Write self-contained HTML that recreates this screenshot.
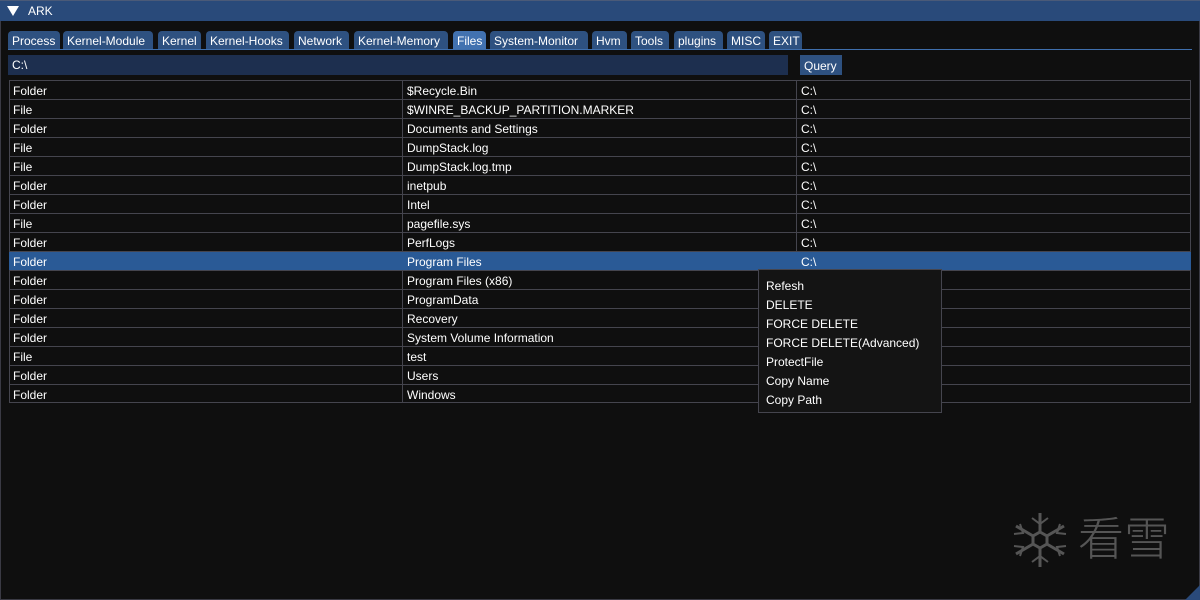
<!DOCTYPE html>
<html><head><meta charset="utf-8"><style>
*{margin:0;padding:0;box-sizing:border-box}
body{width:1200px;height:600px;background:#0f0f0f;font-family:"Liberation Sans","Noto Sans CJK SC",sans-serif;font-size:12px;color:#fff;position:relative;overflow:hidden}
.a{position:absolute;white-space:nowrap}
.tb{left:0;top:0;width:1200px;height:21px;background:#294a7a;border-top:1px solid #4a5a78}
.tab{top:31px;height:18px;background:#2e5180;border-radius:4px 4px 0 0;padding:3px 4px 0;line-height:15px}
.row{left:9px;width:1182px;height:19px;border-bottom:1px solid #45454e}
.c{position:absolute;top:3px;line-height:15px}
.mi{left:766px;line-height:15px}
</style></head><body>
<div class="a" style="left:0;top:0;width:1200px;height:600px;border:1px solid #3a3a44"></div>
<div class="a tb"></div>
<div class="a" style="left:7px;top:6px;width:0;height:0;border-left:6px solid transparent;border-right:6px solid transparent;border-top:10px solid #fff"></div>
<div class="a" style="left:28px;top:4px;line-height:15px">ARK</div>
<div class="a" style="left:8px;top:49px;width:1184px;height:1px;background:#3f6fad"></div>
<div class="a tab" style="left:8px;width:52px">Process</div>
<div class="a tab" style="left:63px;width:90px">Kernel-Module</div>
<div class="a tab" style="left:158px;width:43px">Kernel</div>
<div class="a tab" style="left:206px;width:83px">Kernel-Hooks</div>
<div class="a tab" style="left:294px;width:55px">Network</div>
<div class="a tab" style="left:354px;width:94px">Kernel-Memory</div>
<div class="a tab" style="left:453px;width:33px;background:#4272b0">Files</div>
<div class="a tab" style="left:490px;width:98px">System-Monitor</div>
<div class="a tab" style="left:592px;width:35px">Hvm</div>
<div class="a tab" style="left:631px;width:38px">Tools</div>
<div class="a tab" style="left:674px;width:49px">plugins</div>
<div class="a tab" style="left:727px;width:38px">MISC</div>
<div class="a tab" style="left:769px;width:33px">EXIT</div>
<div class="a" style="left:8px;top:55px;width:780px;height:20px;background:#1d2f4f;padding:3px 4px;line-height:15px">C:\</div>
<div class="a" style="left:800px;top:55px;width:42px;height:20px;background:#2e5180;padding:4px 4px;line-height:15px">Query</div>
<div class="a" style="left:9px;top:80px;width:1182px;height:323px;border:1px solid #45454e"></div>
<div class="a" style="left:402px;top:80px;width:1px;height:323px;background:#45454e"></div>
<div class="a" style="left:796px;top:80px;width:1px;height:323px;background:#45454e"></div>
<div id="rows"></div>
<script>
var d=[["Folder","$Recycle.Bin"],["File","$WINRE_BACKUP_PARTITION.MARKER"],["Folder","Documents and Settings"],["File","DumpStack.log"],["File","DumpStack.log.tmp"],["Folder","inetpub"],["Folder","Intel"],["File","pagefile.sys"],["Folder","PerfLogs"],["Folder","Program Files"],["Folder","Program Files (x86)"],["Folder","ProgramData"],["Folder","Recovery"],["Folder","System Volume Information"],["File","test"],["Folder","Users"],["Folder","Windows"]];
var h="";d.forEach(function(r,i){var t=81+i*19;var bg=i==9?"background:#2a5a96;":"";h+='<div class="a row" style="top:'+t+'px;'+bg+(i==16?'border-bottom:none':'')+'"><span class="c" style="left:4px">'+r[0]+'</span><span class="c" style="left:398px">'+r[1]+'</span><span class="c" style="left:792px">C:\\</span></div>';});
document.getElementById("rows").innerHTML=h;
</script>
<div class="a" style="left:758px;top:269px;width:184px;height:144px;background:#141414;border:1px solid #45454e"></div>
<div class="a mi" style="top:279px">Refesh</div>
<div class="a mi" style="top:298px">DELETE</div>
<div class="a mi" style="top:317px">FORCE DELETE</div>
<div class="a mi" style="top:336px">FORCE DELETE(Advanced)</div>
<div class="a mi" style="top:355px">ProtectFile</div>
<div class="a mi" style="top:374px">Copy Name</div>
<div class="a mi" style="top:393px">Copy Path</div>
<svg class="a" style="left:1010px;top:510px" width="60" height="60" viewBox="0 0 60 60" stroke="#555" stroke-width="3" fill="none">
<line x1="30" y1="3" x2="30" y2="57"/><line x1="6" y1="16" x2="54" y2="44"/><line x1="6" y1="44" x2="54" y2="16"/>
<polygon points="30,22 37,26 37,34 30,38 23,34 23,26" fill="#0f0f0f"/>
<path d="M22 8l8 6 8-6M22 52l8-6 8 6M4 24l9-1-3-9M56 36l-9 1 3 9M4 36l9 1-3 9M56 24l-9-1 3-9" stroke-width="2"/>
</svg>
<div class="a" style="left:1078px;top:506px;font-size:46px;line-height:60px;color:#555;font-family:'Noto Sans CJK SC',sans-serif;font-weight:300">看雪</div>
<div class="a" style="left:1185px;top:585px;width:0;height:0;border-left:15px solid transparent;border-bottom:15px solid #2a4a7a"></div>
</body></html>
